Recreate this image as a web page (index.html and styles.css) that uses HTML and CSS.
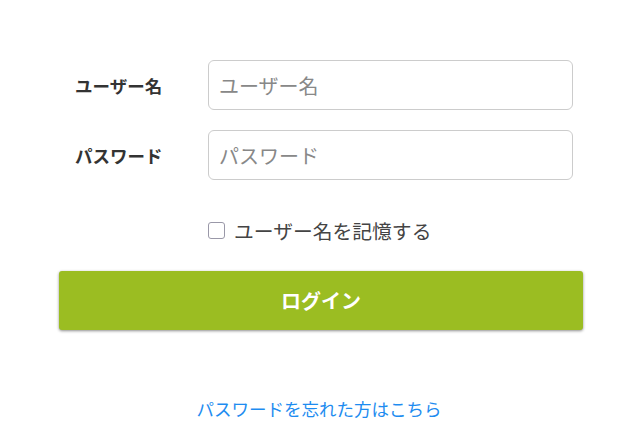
FILE: index.html
```html
<!DOCTYPE html>
<html lang="ja">
<head>
    <meta charset="UTF-8">
    <meta name="viewport" content="width=device-width, initial-scale=1.0">
    <title>ログイン</title>
    <link rel="stylesheet" href="styles.css">
</head>
<body>
    <!-- ログインフォーム -->
    <form class="login-form">
        <div class="form-row">
            <label for="username" class="form-label">ユーザー名</label>
            <input type="text" id="username" class="form-input" placeholder="ユーザー名">
        </div>
        <div class="form-row">
            <label for="password" class="form-label">パスワード</label>
            <input type="password" id="password" class="form-input" placeholder="パスワード">
        </div>

        <!-- ユーザー名を記憶 -->
        <div class="remember-row">
            <label class="remember-label">
                <input type="checkbox" class="remember-check">
                <span>ユーザー名を記憶する</span>
            </label>
        </div>

        <button type="submit" class="login-btn">ログイン</button>
    </form>

    <div class="forgot">
        <a href="#" class="forgot-link">パスワードを忘れた方はこちら</a>
    </div>
</body>
</html>
```

FILE: styles.css
```css
body {
    font-family: "Noto Sans CJK JP", "Noto Sans", sans-serif;
    margin: 0;
    background: #fff;
    color: #333;
}
.login-form {
    width: 524px;
    margin: 0 0 0 59px;
    padding-top: 60px;
}
.form-row {
    display: flex;
    align-items: center;
    padding: 0 10px 0 16px;
    margin-bottom: 20px;
}
.form-label {
    width: 133px;
    font-size: 17.5px;
    font-weight: bold;
    color: #333;
}
.form-input {
    flex: 1;
    height: 50px;
    box-sizing: border-box;
    border: 1px solid #ccc;
    border-radius: 6px;
    padding: 0 10px;
    font-family: inherit;
    font-size: 20px;
    color: #333;
}
.form-input::placeholder {
    color: #888;
}
.remember-row {
    padding-left: 149px;
    margin-top: 36px;
    height: 40px;
}
.remember-label {
    display: flex;
    align-items: center;
    font-size: 19.8px;
    color: #444;
}
.remember-check {
    appearance: none;
    box-sizing: border-box;
    width: 17px;
    height: 17px;
    margin: 0 9px 0 0;
    border: 1px solid #9a98a8;
    border-radius: 3px;
    background: #fff;
}
.login-btn {
    display: block;
    width: 524px;
    height: 59px;
    margin-top: 15px;
    border: none;
    border-radius: 3px;
    background-color: #9bbd22;
    color: #fff;
    font-family: inherit;
    font-size: 20px;
    font-weight: bold;
    box-shadow: 0 1px 3px rgba(0, 0, 0, 0.45);
}
.forgot {
    text-align: center;
    margin-top: 66px;
}
.forgot-link {
    color: #1e8cf0;
    font-size: 17.5px;
    text-decoration: none;
}
```
